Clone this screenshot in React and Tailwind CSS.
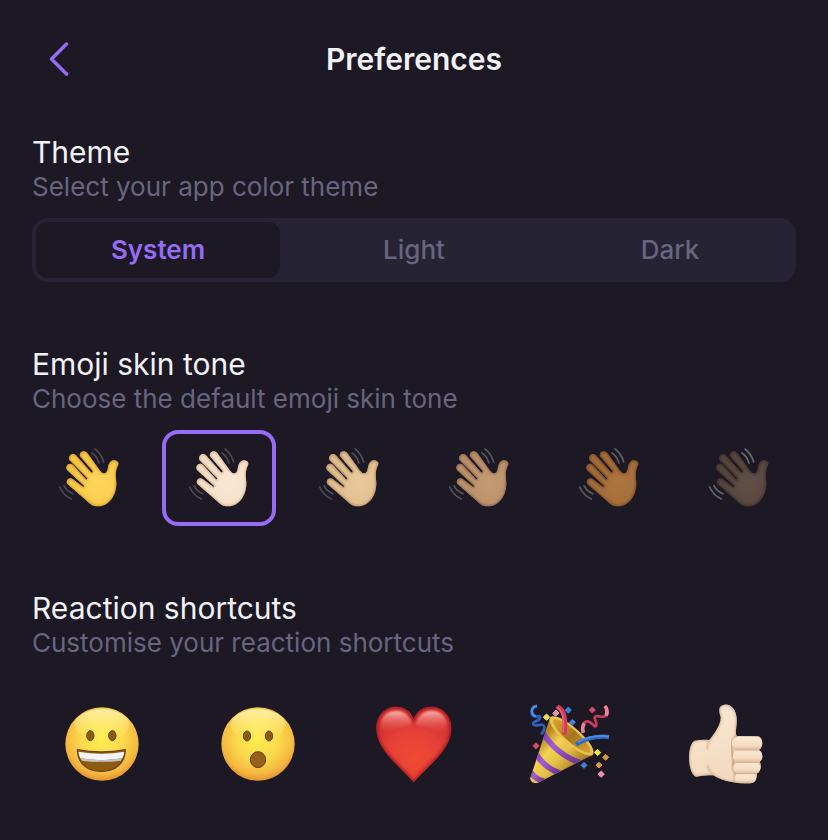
import React, { useState } from "react";
import clsx from "clsx";

const THEMES = ["System", "Light", "Dark"];

const SKIN_TONES = [
  { id: "default", label: "Default", light: "#ffd65c", base: "#f8c847", dark: "#cf8d24", lines: "#4a4a50" },
  { id: "light", label: "Light", light: "#fae7d2", base: "#f5dfc7", dark: "#d3ab86", lines: "#4a4a50" },
  { id: "medium-light", label: "Medium light", light: "#e8c99d", base: "#dfbd8f", dark: "#ab8153", lines: "#4d4d53" },
  { id: "medium", label: "Medium", light: "#c39b73", base: "#b98f69", dark: "#896142", lines: "#54545a" },
  { id: "medium-dark", label: "Medium dark", light: "#ad7541", base: "#a06a3a", dark: "#70431f", lines: "#5c5c62" },
  { id: "dark", label: "Dark", light: "#604f46", base: "#55463e", dark: "#372a24", lines: "#66666c" },
];

const HAND =
  "M81 164 C73 155 84 141 96 148 L127 171 Q131 173 130 168 L79 121 C72 109 85 96 97 106 L136 149 Q141 150 139 145 L87 92 C81 79 94 66 106 77 L151 128 Q157 130 156 124 L118 80 C114 67 130 59 140 70 L177 122 Q184 132 192 131 Q200 129 202 112 C206 93 218 90 226 93 C236 97 234 104 230 111 C223 126 226 142 227 160 C228 192 208 230 172 230 C156 230 147 222 138 213 Z";

const HEART =
  "M624 265 C586 218 512 170 512 103 C512 62 541 38 571 38 C600 38 618 56 624 76 C630 56 648 38 677 38 C707 38 737 62 737 103 C737 170 662 218 624 265 Z";

const THUMB =
  "M44 138 Q66 134 88 136 C105 115 124 88 122 66 C116 50 114 32 134 30 C155 28 168 48 170 70 C172 95 164 112 170 124 L234 125 C250 128 250 158 236 166 C250 170 250 196 238 202 C246 208 243 230 231 236 C232 250 226 266 208 266 C170 266 130 262 100 242 Q74 240 48 246 C22 236 20 150 44 138 Z";

function WavingHand({ tone }) {
  const grad = `hand-${tone.id}`;
  const clip = `hand-clip-${tone.id}`;
  const blur = `hand-blur-${tone.id}`;
  return (
    <svg viewBox="52 52 186 186" className="size-[62px]" aria-hidden="true">
      <defs>
        <radialGradient id={grad} cx="0.62" cy="0.55" r="0.6">
          <stop offset="0" stopColor={tone.light} />
          <stop offset="1" stopColor={tone.base} />
        </radialGradient>
        <clipPath id={clip}>
          <path d={HAND} />
        </clipPath>
        <filter id={blur}>
          <feGaussianBlur stdDeviation="3" />
        </filter>
      </defs>
      <path d={HAND} fill={`url(#${grad})`} />
      <g clipPath={`url(#${clip})`}>
        <path d={HAND} fill="none" stroke={tone.dark} strokeWidth="5" filter={`url(#${blur})`} />
      </g>
      <g fill="none" stroke={tone.lines} strokeWidth="5" strokeLinecap="round">
        <path d="M163 58 Q182 72 189 97" />
        <path d="M154 70 Q169 80 175 100" />
        <path d="M57 172 Q68 197 92 208" />
        <path d="M70 168 Q78 185 97 192" />
      </g>
    </svg>
  );
}

function FaceDefs({ id }) {
  return (
    <defs>
      <radialGradient id={id} cx="0.5" cy="0.42" r="0.6">
        <stop offset="0" stopColor="#fdee52" />
        <stop offset="0.5" stopColor="#fbd94c" />
        <stop offset="0.82" stopColor="#f5b740" />
        <stop offset="1" stopColor="#df8b2c" />
      </radialGradient>
      <linearGradient id={`${id}-shine`} x1="0" y1="0" x2="0" y2="1">
        <stop offset="0" stopColor="#fff8c0" stopOpacity="0.8" />
        <stop offset="1" stopColor="#fff27a" stopOpacity="0" />
      </linearGradient>
    </defs>
  );
}

function Grinning() {
  return (
    <svg viewBox="34 30 240 240" className="size-20" aria-hidden="true">
      <FaceDefs id="grin" />
      <circle cx="154" cy="150" r="110" fill="url(#grin)" />
      <ellipse cx="154" cy="92" rx="82" ry="46" fill="url(#grin-shine)" />
      <g fill="#8a5a14" stroke="#6b410d" strokeWidth="3">
        <ellipse cx="119" cy="125" rx="11" ry="15" />
        <ellipse cx="185" cy="125" rx="11" ry="15" />
      </g>
      <path d="M80 167 Q152 181 224 167 C222 208 196 232 152 232 C108 232 82 208 80 167 Z" fill="#8d5b12" />
      <path d="M83 173 Q152 185 221 173 Q221 184 215 193 Q152 204 89 193 Q83 184 83 173 Z" fill="#f4f4f6" />
      <path d="M89 193 Q152 204 215 193 L211 200 Q152 207 93 200 Z" fill="#c5c4c9" />
      <path d="M80 167 Q152 181 224 167 C222 208 196 232 152 232 C108 232 82 208 80 167 Z" fill="none" stroke="#6b430f" strokeWidth="4" strokeLinejoin="round" />
    </svg>
  );
}

function Surprised() {
  return (
    <svg viewBox="36 30 240 240" className="size-20" aria-hidden="true">
      <FaceDefs id="wow" />
      <circle cx="156" cy="150" r="110" fill="url(#wow)" />
      <ellipse cx="156" cy="92" rx="82" ry="46" fill="url(#wow-shine)" />
      <g fill="#8a5a14" stroke="#6b410d" strokeWidth="3">
        <ellipse cx="123" cy="126" rx="11" ry="15" />
        <ellipse cx="189" cy="126" rx="11" ry="15" />
        <ellipse cx="156" cy="197" rx="23" ry="24" fill="#966019" />
      </g>
    </svg>
  );
}

function Heart() {
  return (
    <svg viewBox="505 30 240 240" className="size-20" aria-hidden="true">
      <defs>
        <radialGradient id="heart" cx="0.5" cy="0.68" r="0.62">
          <stop offset="0" stopColor="#f04a32" />
          <stop offset="0.6" stopColor="#e54039" />
          <stop offset="1" stopColor="#d0302f" />
        </radialGradient>
        <linearGradient id="heart-shine" x1="0" y1="0" x2="0" y2="1">
          <stop offset="0" stopColor="#ffc4c0" stopOpacity="0.9" />
          <stop offset="1" stopColor="#f06058" stopOpacity="0" />
        </linearGradient>
        <clipPath id="heart-clip">
          <path d={HEART} />
        </clipPath>
        <filter id="heart-blur">
          <feGaussianBlur stdDeviation="4" />
        </filter>
        <filter id="heart-soft">
          <feGaussianBlur stdDeviation="3" />
        </filter>
      </defs>
      <path d={HEART} fill="url(#heart)" />
      <g clipPath="url(#heart-clip)">
        <path d={HEART} fill="none" stroke="#a8161c" strokeWidth="9" filter="url(#heart-blur)" />
      </g>
      <g fill="url(#heart-shine)" filter="url(#heart-soft)">
        <path d="M524 100 C524 66 546 50 572 50 C598 50 613 68 620 91 C602 96 574 98 550 112 Q530 124 524 100 Z" />
        <path d="M725 100 C725 66 703 50 677 50 C651 50 636 68 629 91 C647 96 675 98 699 112 Q719 124 725 100 Z" />
      </g>
    </svg>
  );
}

function PartyPopper() {
  return (
    <svg viewBox="44 30 240 240" className="size-20" aria-hidden="true">
      <defs>
        <linearGradient id="cone" x1="0.15" y1="0.35" x2="0.65" y2="0.85">
          <stop offset="0" stopColor="#b8851f" />
          <stop offset="0.3" stopColor="#f3d254" />
          <stop offset="0.6" stopColor="#e6c044" />
          <stop offset="1" stopColor="#a87724" />
        </linearGradient>
        <linearGradient id="stripe" x1="0" y1="0" x2="1" y2="0.6">
          <stop offset="0" stopColor="#7b3bb4" />
          <stop offset="0.4" stopColor="#a35fd2" />
          <stop offset="1" stopColor="#74389f" />
        </linearGradient>
        <linearGradient id="cone-inside" x1="0" y1="0" x2="1" y2="1">
          <stop offset="0" stopColor="#dda82f" />
          <stop offset="0.5" stopColor="#a8741f" />
          <stop offset="1" stopColor="#d9a534" />
        </linearGradient>
        <clipPath id="cone-clip">
          <path d="M104 71 L45 252 C44 263 56 270 68 266 L233 182 C205 186 112 120 104 71 Z" />
        </clipPath>
      </defs>
      <path d="M104 71 L45 252 C44 263 56 270 68 266 L233 182 C205 186 112 120 104 71 Z" fill="url(#cone)" />
      <g clipPath="url(#cone-clip)" fill="none" stroke="url(#stripe)" strokeWidth="17">
        <path d="M82 116 Q126 184 196 206" />
        <path d="M60 176 Q86 222 136 238" />
        <path d="M44 232 Q58 255 86 262" />
      </g>
      {/* mouth of the cone */}
      <path d="M104 71 C112 60 146 72 182 104 C222 137 242 170 233 182 C220 193 174 168 140 134 C112 106 98 82 104 71 Z" fill="#e8c450" />
      <path d="M113 77 C124 71 151 84 178 109 C209 136 229 164 225 175 C214 181 178 160 149 132 C122 106 109 86 113 77 Z" fill="url(#cone-inside)" />
      {/* streamers */}
      <path d="M126 38 C148 49 153 80 146 122" fill="none" stroke="#d23a56" strokeWidth="14" />
      <path d="M123 39 C145 50 148 78 143 116" fill="none" stroke="#ec5c78" strokeWidth="5" />
      <path d="M182 151 C207 136 235 124 281 129" fill="none" stroke="#2f68c8" strokeWidth="13" />
      <path d="M188 144 C212 131 239 122 281 127" fill="none" stroke="#4f90e6" strokeWidth="5" />
      <path d="M65 36 C50 35 43 55 54 66 C62 72 75 60 74 72 C72 82 50 82 54 91 C59 101 85 84 87 98 Q89 109 77 121" fill="none" stroke="#2f62c0" strokeWidth="8" />
      <path d="M65 36 Q49 38 50 54 Q52 63 61 67" fill="none" stroke="#4a8ee6" strokeWidth="7" />
      <path d="M205 115 C198 101 204 83 215 82 C230 80 237 105 243 94 C247 84 230 70 242 67 C252 64 268 76 276 60 Q279 47 269 36" fill="none" stroke="#cf3b5e" strokeWidth="8" />
      <path d="M204 116 Q199 99 207 88 M272 65 Q279 49 269 36" fill="none" stroke="#f08199" strokeWidth="11" />
      {/* confetti */}
      <g strokeWidth="3" strokeLinejoin="round">
        <path d="M94 60 L103 70 L93 79 L84 69 Z M247 166 L256 176 L247 185 L237 175 Z" fill="#efe248" stroke="#efe248" />
        <path d="M122 48 L131 57 L121 67 L112 58 Z M258 231 L267 241 L257 250 L248 240 Z" fill="#ee8fb0" stroke="#ee8fb0" />
        <path d="M159 39 L168 48 L159 58 L149 49 Z M171 76 L180 85 L171 94 L162 85 Z M206 205 L215 214 L206 223 L197 214 Z" fill="#3e7fd8" stroke="#3e7fd8" />
        <path d="M231 39 L240 48 L231 57 L222 48 Z M62 146 L71 155 L62 165 L53 155 Z" fill="#d84868" stroke="#d84868" />
        <path d="M251 205 L260 213 L251 222 L242 213 Z M271 181 L280 190 L271 199 L262 190 Z" fill="#df9640" stroke="#df9640" />
      </g>
    </svg>
  );
}

function ThumbsUp() {
  return (
    <svg viewBox="18 28 240 240" className="size-20" aria-hidden="true">
      <defs>
        <linearGradient id="thumb" x1="0" y1="0" x2="0.3" y2="1">
          <stop offset="0" stopColor="#fae8d4" />
          <stop offset="1" stopColor="#f3d9bf" />
        </linearGradient>
        <linearGradient id="finger" x1="0" y1="0" x2="0" y2="1">
          <stop offset="0" stopColor="#fae9d6" />
          <stop offset="0.65" stopColor="#f4dcc4" />
          <stop offset="1" stopColor="#dcb899" />
        </linearGradient>
        <clipPath id="thumb-clip">
          <path d={THUMB} />
        </clipPath>
        <filter id="thumb-blur">
          <feGaussianBlur stdDeviation="3" />
        </filter>
      </defs>
      <path d={THUMB} fill="url(#thumb)" />
      <g clipPath="url(#thumb-clip)">
        <path d={THUMB} fill="none" stroke="#cda47f" strokeWidth="5" filter="url(#thumb-blur)" />
        <path d="M172 124 Q154 135 156 158 Q153 176 162 194 Q156 220 168 238 L166 260" fill="none" stroke="#c79c79" strokeWidth="8" filter="url(#thumb-blur)" />
        <path d="M87 137 Q79 153 82 165 M82 210 Q86 230 102 242" fill="none" stroke="#d5ad8c" strokeWidth="5" filter="url(#thumb-blur)" />
      </g>
      <g fill="url(#finger)">
        <rect x="164" y="236" width="64" height="30" rx="15" />
        <rect x="160" y="202" width="81" height="36" rx="17" />
        <rect x="159" y="166" width="88" height="38" rx="18" />
        <rect x="156" y="126" width="91" height="41" rx="19" />
      </g>
      <g fill="none" stroke="#cda17e" strokeWidth="2">
        <path d="M166 166 H234" />
        <path d="M167 203 H235" />
        <path d="M170 237 H228" />
      </g>
    </svg>
  );
}

const REACTIONS = [
  { label: "Grinning face", Icon: Grinning },
  { label: "Surprised face", Icon: Surprised },
  { label: "Red heart", Icon: Heart },
  { label: "Party popper", Icon: PartyPopper },
  { label: "Thumbs up", Icon: ThumbsUp },
];

function Section({ title, description, children }) {
  return (
    <section>
      <h2 className="text-[30px] leading-9 text-[#f2f1f5]">{title}</h2>
      <p className="mb-[14px] text-[26px] leading-[34px] text-[#686580]">{description}</p>
      {children}
    </section>
  );
}

export default function App() {
  const [theme, setTheme] = useState("System");
  const [skinTone, setSkinTone] = useState("light");

  return (
    <div className="min-h-screen bg-[#1c1925] px-8 font-['Inter',sans-serif]">
      <header className="grid h-[118px] grid-cols-[56px_1fr_56px] items-center">
        <button type="button" aria-label="Back" className="flex h-14 items-center pl-4">
          <svg viewBox="0 0 22 34" className="h-[34px] w-[22px]" fill="none" stroke="#966cf5" strokeWidth="3.5" strokeLinecap="round" strokeLinejoin="round" aria-hidden="true">
            <path d="M18.5 2 L3.5 17 L18.5 32" />
          </svg>
        </button>
        <h1 className="text-center text-[30px] leading-9 font-semibold text-[#f2f1f5]">Preferences</h1>
      </header>

      <main className="flex flex-col gap-16 pt-4">
        <Section title="Theme" description="Select your app color theme">
          <div className="grid h-16 grid-cols-3 gap-3 rounded-2xl bg-[#252334] p-1">
            {THEMES.map((name) => (
              <button
                key={name}
                type="button"
                aria-pressed={theme === name}
                onClick={() => setTheme(name)}
                className={clsx(
                  "rounded-xl text-[26px] leading-8",
                  theme === name ? "bg-[#1c1925] font-semibold text-[#966cf5]" : "font-medium text-[#686580]"
                )}
              >
                {name}
              </button>
            ))}
          </div>
        </Section>

        <Section title="Emoji skin tone" description="Choose the default emoji skin tone">
          <div className="grid grid-cols-6 gap-4">
            {SKIN_TONES.map((tone) => (
              <button
                key={tone.id}
                type="button"
                aria-label={tone.label}
                aria-pressed={skinTone === tone.id}
                onClick={() => setSkinTone(tone.id)}
                className={clsx(
                  "flex h-24 items-center justify-center rounded-2xl border-4",
                  skinTone === tone.id ? "border-[#966cf5]" : "border-transparent"
                )}
              >
                <WavingHand tone={tone} />
              </button>
            ))}
          </div>
        </Section>

        <Section title="Reaction shortcuts" description="Customise your reaction shortcuts">
          <div className="grid grid-cols-5 gap-4">
            {REACTIONS.map(({ label, Icon }) => (
              <button key={label} type="button" aria-label={label} className="flex aspect-square items-center justify-center">
                <Icon />
              </button>
            ))}
          </div>
        </Section>
      </main>
    </div>
  );
}
